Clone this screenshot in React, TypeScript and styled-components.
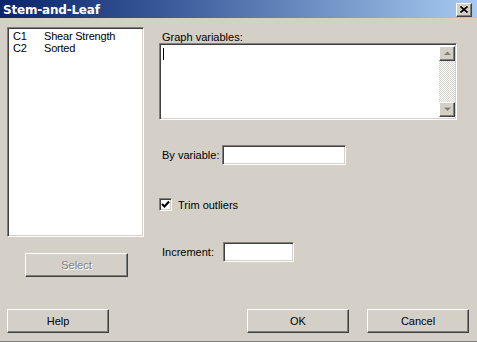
import React from "react";
import styled, { createGlobalStyle, css } from "styled-components";

const Global = createGlobalStyle`
  html, body { margin: 0; padding: 0; background: #D4D0C8; }
  body { font-family: "Liberation Sans", Arial, sans-serif; font-size: 11px; color: #000; }
`;

const Window = styled.div`
  width: 477px;
  height: 342px;
  box-sizing: border-box;
  background: #D4D0C8;
  display: flex;
  flex-direction: column;
  border-bottom: 1px solid #808080;
  overflow: hidden;
`;

const TitleBar = styled.div`
  height: 18px;
  flex: none;
  background: linear-gradient(90deg, #0A246A 0%, #3A5A9A 35%, #A6CAF0 100%);
  display: flex;
  align-items: center;
  justify-content: space-between;
  padding: 0 5px 0 3px;
`;

const Title = styled.span`
  color: #fff;
  font-weight: bold;
  font-size: 12px;
  font-family: "DejaVu Sans", Tahoma, sans-serif;
  letter-spacing: -0.2px;
  margin-top: 1px;
`;

const raised = css`
  background: #D4D0C8;
  border-style: solid;
  border-width: 1px;
  border-color: #fff #404040 #404040 #fff;
  box-shadow: inset -1px -1px 0 #808080;
  box-sizing: border-box;
`;

const sunken = css`
  background: #fff;
  border-style: solid;
  border-width: 1px;
  border-color: #808080 #fff #fff #808080;
  box-shadow: inset 1px 1px 0 #404040, inset -1px -1px 0 #D4D0C8;
  box-sizing: border-box;
`;

const CloseBox = styled.div`
  ${raised};
  width: 16px;
  height: 14px;
  display: flex;
  align-items: center;
  justify-content: center;
  margin-top: 1px;
`;

const Body = styled.div`
  flex: 1;
  display: grid;
  grid-template-columns: 137px 1fr;
  column-gap: 15px;
  padding: 9px 0 0 7px;
`;

const LeftCol = styled.div`
  display: flex;
  flex-direction: column;
`;

const ListBox = styled.div`
  ${sunken};
  height: 210px;
  padding: 2px 0 0 5px;
`;

const ListRow = styled.div`
  display: flex;
  height: 12px;
  line-height: 12px;
  letter-spacing: -0.2px;
`;

const ColId = styled.span`
  width: 31px;
`;

const Button = styled.div<{ $w?: number; $disabled?: boolean }>`
  ${raised};
  width: ${(p) => p.$w ?? 103}px;
  height: 24px;
  display: flex;
  align-items: center;
  justify-content: center;
  font-size: 11px;
  color: ${(p) => (p.$disabled ? "#808080" : "#000")};
  text-shadow: ${(p) => (p.$disabled ? "1px 1px 0 #fff" : "none")};
`;

const SelectWrap = styled.div`
  margin: 16px 0 0 18px;
`;

const RightCol = styled.div`
  display: flex;
  flex-direction: column;
  padding-top: 4px;
`;

const Label = styled.span<{ $w?: number }>`
  padding-left: 3px;
  font-size: 11px;
  box-sizing: border-box;
  ${(p) => (p.$w ? `width: ${p.$w}px; flex: none;` : "")}
`;

const TextArea = styled.div`
  ${sunken};
  width: 298px;
  height: 77px;
  display: flex;
  padding: 2px 1px 2px 2px;
`;

const Caret = styled.div`
  width: 1px;
  height: 12px;
  background: #000;
  margin: 2px 0 0 1px;
`;

const Spacer = styled.div`
  flex: 1;
`;

const ScrollBar = styled.div`
  width: 16px;
  display: flex;
  flex-direction: column;
  background-color: #F4F3EF;
  background-image: repeating-conic-gradient(#D4D0C8 0 25%, #fff 0 50%);
  background-size: 2px 2px;
`;

const ScrollBtn = styled.div`
  ${raised};
  width: 16px;
  height: 15px;
  display: flex;
  align-items: center;
  justify-content: center;
`;

const Row = styled.div<{ $mt: number }>`
  display: flex;
  align-items: center;
  margin-top: ${(p) => p.$mt}px;
`;

const Field = styled.div<{ $w: number }>`
  ${sunken};
  width: ${(p) => p.$w}px;
  height: 20px;
`;

const CheckBox = styled.div`
  ${sunken};
  width: 13px;
  height: 13px;
  display: flex;
  align-items: center;
  justify-content: center;
`;

const CheckLabel = styled.span`
  margin-left: 6px;
  font-size: 11px;
`;

const Footer = styled.div`
  display: flex;
  padding: 0 0 8px 7px;
  height: 24px;
  margin-top: auto;
`;

const Gap = styled.div<{ $w: number }>`
  width: ${(p) => p.$w}px;
  flex: none;
`;

const Arrow = ({ up }: { up?: boolean }) => (
  <svg width="7" height="5" viewBox="0 0 7 5">
    <path d={up ? "M3.5 0.5 L7 4 L0 4 Z" : "M0 0.5 L7 0.5 L3.5 4 Z"} fill="#808080" />
  </svg>
);

export default function App() {
  return (
    <>
      <Global />
      <Window>
        <TitleBar>
          <Title>Stem-and-Leaf</Title>
          <CloseBox>
            <svg width="8" height="7" viewBox="0 0 8 7">
              <path d="M0.5 0.5 L7.5 6.5 M7.5 0.5 L0.5 6.5" stroke="#000" strokeWidth="1.6" />
            </svg>
          </CloseBox>
        </TitleBar>
        <Body>
          <LeftCol>
            <ListBox>
              <ListRow>
                <ColId>C1</ColId>
                <span>Shear Strength</span>
              </ListRow>
              <ListRow>
                <ColId>C2</ColId>
                <span>Sorted</span>
              </ListRow>
            </ListBox>
            <SelectWrap>
              <Button $w={103} $disabled>
                Select
              </Button>
            </SelectWrap>
          </LeftCol>
          <RightCol>
            <Label>Graph variables:</Label>
            <TextArea>
              <Caret />
              <Spacer />
              <ScrollBar>
                <ScrollBtn>
                  <Arrow up />
                </ScrollBtn>
                <Spacer />
                <ScrollBtn>
                  <Arrow />
                </ScrollBtn>
              </ScrollBar>
            </TextArea>
            <Row $mt={25}>
              <Label $w={63}>By variable:</Label>
              <Field $w={124} />
            </Row>
            <Row $mt={33}>
              <CheckBox>
                <svg width="9" height="9" viewBox="0 0 9 9">
                  <path d="M1 4 L3.5 6.5 L8 1.5" stroke="#000" strokeWidth="2" fill="none" />
                </svg>
              </CheckBox>
              <CheckLabel>Trim outliers</CheckLabel>
            </Row>
            <Row $mt={31}>
              <Label $w={64}>Increment:</Label>
              <Field $w={71} />
            </Row>
          </RightCol>
        </Body>
        <Footer>
          <Button $w={102}>Help</Button>
          <Gap $w={138} />
          <Button $w={102}>OK</Button>
          <Gap $w={18} />
          <Button $w={102}>Cancel</Button>
        </Footer>
      </Window>
    </>
  );
}
